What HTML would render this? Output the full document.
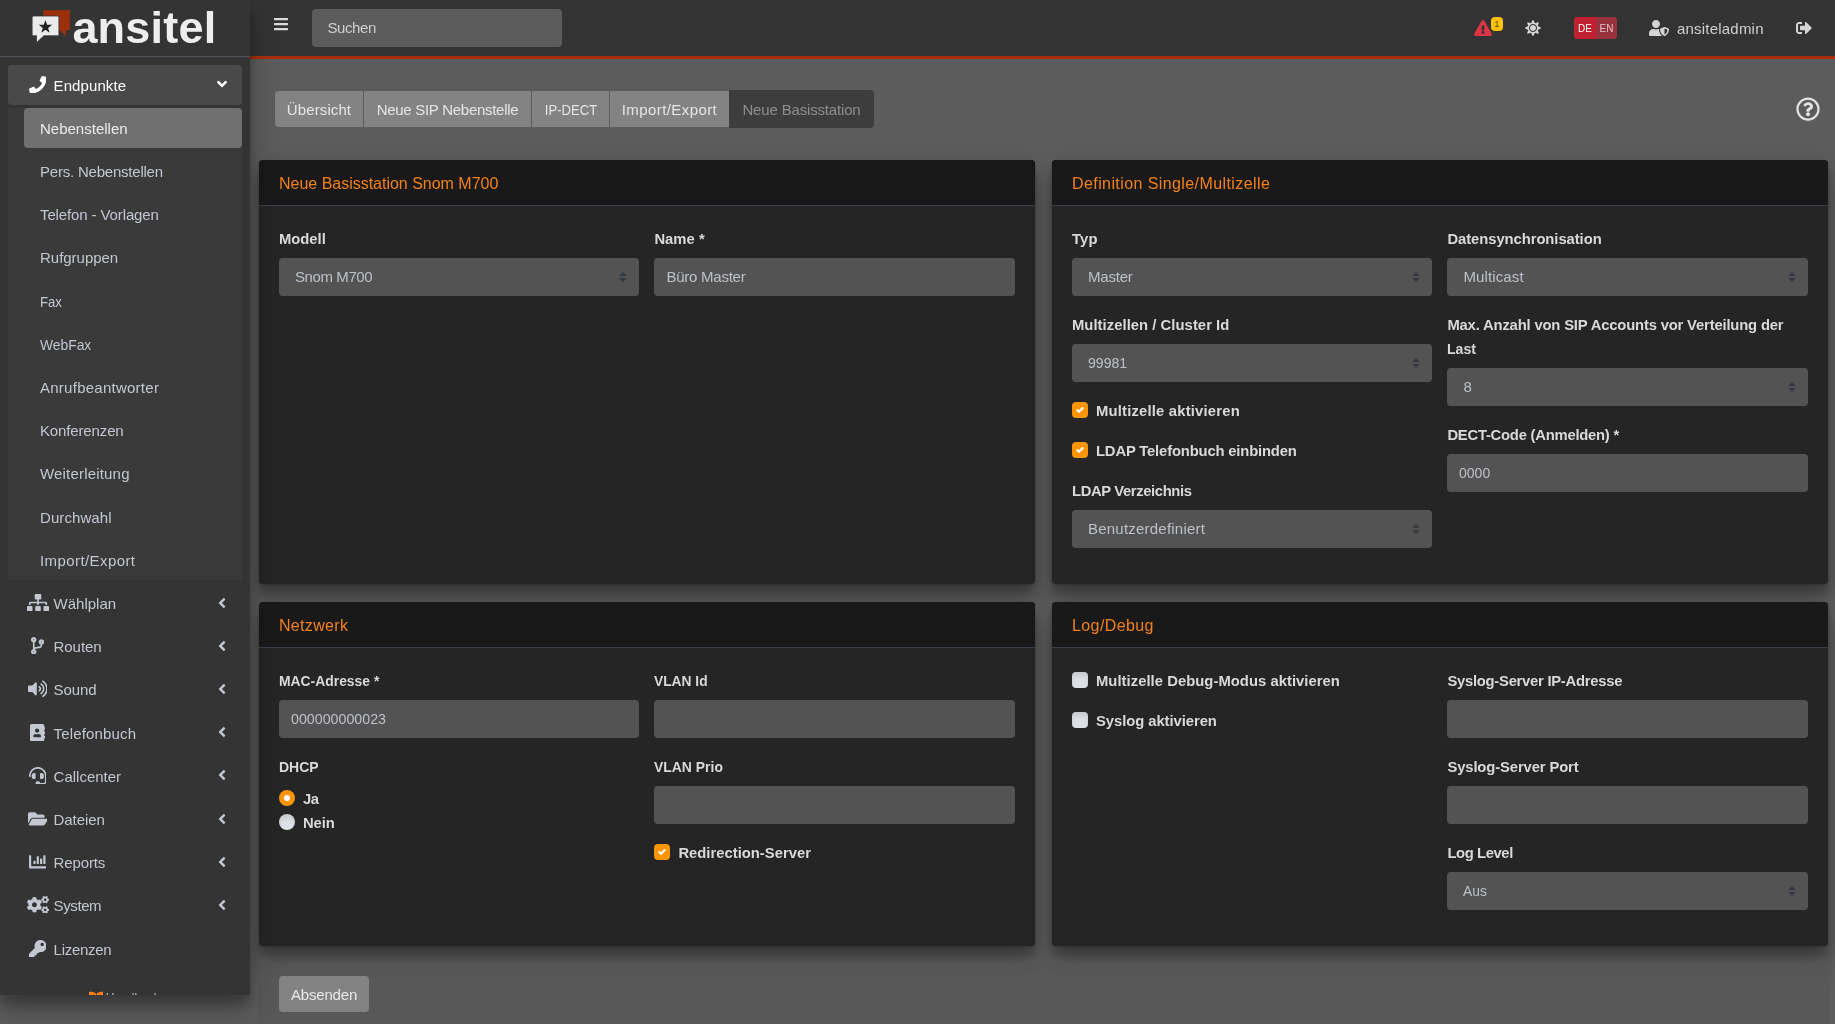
<!DOCTYPE html>
<html lang="de">
<head>
<meta charset="utf-8">
<title>ansitel - Neue Basisstation</title>
<style>
*{box-sizing:border-box}
html,body{margin:0;padding:0}
body{will-change:transform;width:1835px;height:1024px;overflow:hidden;position:relative;background:#5c5c5c;color:#dcdcdc;font-family:"Liberation Sans",sans-serif;font-size:15px;line-height:24px}
.t{position:relative;top:1px;white-space:nowrap}
.tx{display:inline-block;transform-origin:0 50%}
.btng .tx{transform-origin:50% 50%}
#sb{position:absolute;left:0;top:0;width:250px;height:995px;background:#343434;overflow:hidden;z-index:20}
#sbshadow{position:absolute;left:0;top:0;width:250px;height:995px;z-index:15;box-shadow:0 14px 28px rgba(0,0,0,.25),0 10px 10px rgba(0,0,0,.22)}
#brand{position:absolute;left:0;top:0;width:250px;height:57px;border-bottom:1px solid #4b545c}
#brand .bt{position:absolute;left:72.4px;top:2.6px;font-weight:bold;font-size:45px;line-height:50px;color:#eee;letter-spacing:.2px}
.ni{position:absolute;left:8px;width:234px;height:40px;border-radius:4px;color:#c2c7d0;white-space:nowrap}
.nt{position:absolute;left:45.6px;top:8px}
.ni.open{background:#494949;color:#fff}
#tree{position:absolute;left:8px;top:108.2px;width:234px;height:472px;background:#3a3a3a}
.si{position:absolute;left:24px;width:218px;height:40px;border-radius:4px;color:#c2c7d0;white-space:nowrap;padding:8px 16px}
.si.act{background:#707070;color:#ececec}
#hb{position:absolute;left:0;top:990px;width:250px;height:20px;color:#b8bcc4;font-size:12px;line-height:14px}
#hb span{position:absolute;left:105.8px;top:1px}
#tb{position:absolute;left:250px;top:0;width:1585px;height:59px;background:#333;border-bottom:3px solid #aa2e08;z-index:10}
#search{position:absolute;left:62px;top:9px;width:250px;height:38px;background:#5c5c5c;border-radius:4px;color:#cfcfcf;padding:7px 15.5px}
#badge{position:absolute;left:1241px;top:17px;width:12px;height:13.5px;border-radius:4px;background:#ffc107;color:#5b4a10;font-size:9.5px;line-height:13.5px;text-align:center}
#lang{position:absolute;left:1324px;top:17px;width:43px;height:22px;font-size:10px;line-height:23px;text-align:center}
#lang span{position:absolute;top:0;height:22px}
#lang .de{left:0;width:22px;background:#c0202f;color:#fff;border-radius:3px 0 0 3px}
#lang .en{left:22px;width:21px;background:#98323e;color:#e3c2c6;border-radius:0 3px 3px 0}
#user{position:absolute;left:1427px;top:16px;color:#cfcfcf;white-space:nowrap}
.btng{position:absolute;left:275px;top:91px;height:36px;display:flex}
.btng>span{display:block;height:36px;line-height:24px;padding:6px 0;text-align:center;background:#838383;color:#e6e6e6;border-right:1px solid #5c5c5c;white-space:nowrap}
.btng>span:first-child{border-radius:4px 0 0 4px}
.btng>span:last-child{border-radius:0 4px 4px 0;background:#3d3d3d;color:#8e8e8e;border-right:0;height:38px;margin-top:-1px;padding:7px 0;margin-left:-1px}
.card{position:absolute;background:#252525;border-radius:4px;box-shadow:0 0 1px rgba(0,0,0,.125),0 1px 3px rgba(0,0,0,.2),0 14px 28px rgba(0,0,0,.25),0 10px 10px rgba(0,0,0,.22)}
.card .hd{height:46px;background:#191919;border-bottom:1px solid #36404a;border-radius:4px 4px 0 0;color:#f5811a;font-size:16px;line-height:45px;padding-left:20px;white-space:nowrap}
.lb{position:absolute;font-weight:bold;color:#d9d9d9;white-space:nowrap}
.in{position:absolute;height:38px;background:#535353;border-radius:4px;color:#bcc0c8;padding:7px 12px;white-space:nowrap}
.in.sel{padding-left:16px}
.in.sel svg{position:absolute;right:11.8px;top:14px}
.ck{position:absolute;font-weight:bold;color:#d9d9d9;white-space:nowrap;padding-left:24px;height:24px}
.ck i{position:absolute;left:0;top:4px;width:16px;height:16px;border-radius:4px;display:block}
.ck i.on{background:#fc9505;box-shadow:0 0 0 .5px #1c2533}
.ck i.off{background:#dee2e6;box-shadow:inset 0 4px 4px rgba(0,0,0,.1)}
.ck i svg{position:absolute;left:4px;top:4px}
.ck i.r{border-radius:50%}
.ck i.r b{position:absolute;left:5px;top:5px;width:6px;height:6px;border-radius:50%;background:#fff}
#submit{position:absolute;left:279px;top:976px;width:90px;height:36px;border-radius:4px;background:#838383;color:#e8e8e8;text-align:center;line-height:24px;padding:6px 0}
#search .t{top:0}
#foot{position:absolute;left:258px;top:963px;width:1571px;height:61px;background:rgba(85,85,85,.44)}
.in .t{top:0}
</style>
</head>
<body>
<div id="sb">
<div id="brand"><svg style="position:absolute;left:0;top:0" width="80" height="56" viewBox="0 0 80 56"><path fill="#9e2f0c" d="M44.3 10.2h24.6a1 1 0 0 1 1 1v17.700a1 1 0 0 1-1 1h-3v6.300l-6.600-6.300h-15a1 1 0 0 1-1-1V11.200a1 1 0 0 1 1-1z"/><path fill="#ebebeb" stroke="#343434" stroke-width=".8" d="M33.600 16h23.800a1.500 1.500 0 0 1 1.500 1.500v16.800a1.500 1.500 0 0 1-1.500 1.500H43.900l-6.900 6.400-.5-.2v-6.200h-2.900a1.500 1.500 0 0 1-1.500-1.500V17.500a1.500 1.500 0 0 1 1.500-1.500z"/><path fill="#222" d="M45.45 19.95L47.10 24.78L52.20 24.86L48.11 27.92L49.62 32.79L45.45 29.85L41.28 32.79L42.79 27.92L38.70 24.86L43.80 24.78z"/></svg><span class="bt">ansitel</span></div>
<div class="ni open" style="top:65px"><svg style="position:absolute;left:20.80px;top:10.60px;" width="17.60" height="17.60" viewBox="0 0 512 512"><path fill="#fff" d="M493.400 24.600l-104-24c-11.300-2.600-22.900 3.300-27.500 13.900l-48 112c-4.200 9.800-1.400 21.300 6.900 28l60.600 49.600c-36 76.700-98.900 140.500-177.200 177.200l-49.600-60.600c-6.800-8.300-18.200-11.100-28-6.900l-112 48C3.900 366.500-2 378.100.6 389.400l24 104C27.100 504.200 36.700 512 48 512c256.100 0 464-207.500 464-464 0-11.200-7.700-20.900-18.600-23.400z"/></svg><span class="nt" style="top:8.0000px"><span class="t" style="font-size:15.0px;letter-spacing:0.083px">Endpunkte</span></span><svg style="position:absolute;left:210.00px;top:11.20px;transform:rotate(-90deg);" width="8.00" height="16.00" viewBox="0 0 256 512"><path fill="#fff" d="M31.7 239l136-136c9.400-9.400 24.600-9.400 33.900 0l22.600 22.600c9.400 9.400 9.400 24.600 0 33.900L127.900 256l96.400 96.400c9.400 9.400 9.400 24.600 0 33.900L201.700 409c-9.400 9.400-24.600 9.400-33.900 0l-136-136c-9.500-9.400-9.500-24.600-.1-34z"/></svg></div>
<div id="tree"></div>
<div class="si act" style="top:108.2000px"><span class="nt" style="left:16px;top:7.8000px"><span class="t" style="font-size:15.0px;letter-spacing:0.003px">Nebenstellen</span></span></div>
<div class="si" style="top:151.4000px"><span class="nt" style="left:16px;top:7.6000px"><span class="t" style="font-size:15.0px;letter-spacing:-0.215px">Pers. Nebenstellen</span></span></div>
<div class="si" style="top:194.6000px"><span class="nt" style="left:16px;top:7.4000px"><span class="t" style="font-size:15.0px;letter-spacing:-0.119px">Telefon - Vorlagen</span></span></div>
<div class="si" style="top:237.8000px"><span class="nt" style="left:16px;top:7.2000px"><span class="t" style="font-size:15.0px;letter-spacing:-0.023px">Rufgruppen</span></span></div>
<div class="si" style="top:281.0000px"><span class="nt" style="left:16px;top:8.0000px"><span class="t tx" style="font-size:15.0px;transform:scaleX(0.8755)">Fax</span></span></div>
<div class="si" style="top:324.2000px"><span class="nt" style="left:16px;top:7.8000px"><span class="t tx" style="font-size:15.0px;transform:scaleX(0.9230)">WebFax</span></span></div>
<div class="si" style="top:367.4000px"><span class="nt" style="left:16px;top:7.6000px"><span class="t" style="font-size:15.0px;letter-spacing:0.255px">Anrufbeantworter</span></span></div>
<div class="si" style="top:410.6000px"><span class="nt" style="left:16px;top:7.4000px"><span class="t" style="font-size:15.0px;letter-spacing:-0.138px">Konferenzen</span></span></div>
<div class="si" style="top:453.8000px"><span class="nt" style="left:16px;top:7.2000px"><span class="t" style="font-size:15.0px;letter-spacing:0.185px">Weiterleitung</span></span></div>
<div class="si" style="top:497.0000px"><span class="nt" style="left:16px;top:8.0000px"><span class="t" style="font-size:15.0px;letter-spacing:0.078px">Durchwahl</span></span></div>
<div class="si" style="top:540.2000px"><span class="nt" style="left:16px;top:7.8000px"><span class="t" style="font-size:15.0px;letter-spacing:0.414px">Import/Export</span></span></div>
<div class="ni" style="top:583.4000px"><svg style="position:absolute;left:18.60px;top:10.20px;" width="22.00" height="17.60" viewBox="0 0 640 512"><path fill="#c2c7d0" d="M128 352H32c-17.670 0-32 14.330-32 32v96c0 17.670 14.330 32 32 32h96c17.670 0 32-14.330 32-32v-96c0-17.670-14.330-32-32-32zm-24-80h192v48h48v-48h192v48h48v-57.590c0-21.170-17.230-38.410-38.410-38.410H344v-64h40c17.670 0 32-14.330 32-32V32c0-17.670-14.330-32-32-32H256c-17.670 0-32 14.330-32 32v96c0 17.670 14.330 32 32 32h40v64H94.410C73.230 224 56 241.230 56 262.410V320h48v-48zm264 80h-96c-17.670 0-32 14.330-32 32v96c0 17.670 14.330 32 32 32h96c17.670 0 32-14.330 32-32v-96c0-17.670-14.330-32-32-32zm240 0h-96c-17.670 0-32 14.330-32 32v96c0 17.670 14.330 32 32 32h96c17.670 0 32-14.330 32-32v-96c0-17.670-14.330-32-32-32z"/></svg><span class="nt" style="top:7.6000px"><span class="t" style="font-size:15.0px;letter-spacing:-0.007px">Wählplan</span></span><svg style="position:absolute;left:210.00px;top:11.20px;" width="8.00" height="16.00" viewBox="0 0 256 512"><path fill="#c2c7d0" d="M31.7 239l136-136c9.400-9.400 24.600-9.400 33.900 0l22.600 22.600c9.400 9.400 9.400 24.600 0 33.900L127.900 256l96.400 96.400c9.400 9.400 9.400 24.600 0 33.900L201.700 409c-9.400 9.400-24.600 9.400-33.900 0l-136-136c-9.500-9.400-9.500-24.600-.1-34z"/></svg></div>
<div class="ni" style="top:626.6000px"><svg style="position:absolute;left:23.00px;top:10.00px;" width="13.20" height="17.60" viewBox="0 0 384 512"><path fill="#c2c7d0" d="M384 144c0-44.200-35.800-80-80-80s-80 35.800-80 80c0 36.400 24.300 67.100 57.500 76.800-.6 16.100-4.200 28.500-11 36.900-15.400 19.200-49.300 22.400-85.200 25.700-28.200 2.600-57.400 5.400-81.300 16.900v-144c32.500-10.200 56-40.500 56-76.300 0-44.200-35.800-80-80-80S0 35.800 0 80c0 35.800 23.500 66.100 56 76.300v199.300C23.500 365.900 0 396.200 0 432c0 44.200 35.800 80 80 80s80-35.800 80-80c0-34-21.200-63.100-51.200-74.600 3.100-5.200 7.800-9.800 14.900-13.400 16.200-8.200 40.400-10.400 66.100-12.800 42.200-3.900 90-8.400 118.200-43.400 14-17.400 21.100-39.800 21.600-67.900 31.600-10.800 54.400-40.700 54.400-75.900zM80 64c8.800 0 16 7.200 16 16s-7.200 16-16 16-16-7.200-16-16 7.200-16 16-16zm0 384c-8.800 0-16-7.200-16-16s7.200-16 16-16 16 7.200 16 16-7.200 16-16 16zm224-320c8.800 0 16 7.200 16 16s-7.200 16-16 16-16-7.200-16-16 7.200-16 16-16z"/></svg><span class="nt" style="top:7.4000px"><span class="t" style="font-size:15.0px;letter-spacing:-0.075px">Routen</span></span><svg style="position:absolute;left:210.00px;top:11.20px;" width="8.00" height="16.00" viewBox="0 0 256 512"><path fill="#c2c7d0" d="M31.7 239l136-136c9.400-9.400 24.600-9.400 33.900 0l22.600 22.600c9.400 9.400 9.400 24.600 0 33.900L127.900 256l96.400 96.400c9.400 9.400 9.400 24.600 0 33.900L201.700 409c-9.400 9.400-24.600 9.400-33.900 0l-136-136c-9.500-9.400-9.500-24.600-.1-34z"/></svg></div>
<div class="ni" style="top:669.8000px"><svg style="position:absolute;left:19.70px;top:9.80px;" width="19.80" height="17.60" viewBox="0 0 576 512"><path fill="#c2c7d0" d="M215.030 71.050L126.060 160H24c-13.260 0-24 10.740-24 24v144c0 13.250 10.740 24 24 24h102.060l88.970 88.950c15.030 15.030 40.970 4.470 40.970-16.970V88.020c0-21.460-25.960-31.980-40.970-16.970zm233.320-51.080c-11.170-7.330-26.180-4.240-33.510 6.950-7.340 11.170-4.220 26.180 6.950 33.510 66.270 43.490 105.820 116.600 105.820 195.580 0 78.980-39.550 152.090-105.820 195.580-11.170 7.320-14.290 22.340-6.950 33.500 7.040 10.710 21.930 14.560 33.510 6.950C528.270 439.580 576 351.330 576 256S528.270 72.430 448.350 19.970zM480 256c0-63.530-32.060-121.940-85.770-156.240-11.190-7.140-26.030-3.820-33.120 7.460s-3.780 26.210 7.410 33.360C408.270 165.970 432 209.110 432 256s-23.730 90.030-63.480 115.420c-11.190 7.140-14.500 22.070-7.410 33.360 6.510 10.360 21.120 15.140 33.120 7.460C447.940 377.940 480 319.540 480 256zm-141.770-76.870c-11.580-6.330-26.190-2.160-32.610 9.450-6.390 11.610-2.160 26.200 9.450 32.610C327.980 228.280 336 241.630 336 256c0 14.380-8.020 27.720-20.920 34.810-11.610 6.410-15.840 21-9.450 32.610 6.430 11.660 21.050 15.800 32.610 9.450 28.230-15.550 45.770-45 45.770-76.880s-17.540-61.320-45.780-76.860z"/></svg><span class="nt" style="top:7.2000px"><span class="t" style="font-size:15.0px;letter-spacing:-0.094px">Sound</span></span><svg style="position:absolute;left:210.00px;top:11.20px;" width="8.00" height="16.00" viewBox="0 0 256 512"><path fill="#c2c7d0" d="M31.7 239l136-136c9.400-9.400 24.600-9.400 33.900 0l22.600 22.600c9.400 9.400 9.400 24.600 0 33.900L127.900 256l96.400 96.400c9.400 9.400 9.400 24.600 0 33.900L201.700 409c-9.400 9.400-24.600 9.400-33.900 0l-136-136c-9.500-9.400-9.500-24.600-.1-34z"/></svg></div>
<div class="ni" style="top:713.0000px"><svg style="position:absolute;left:21.90px;top:10.60px;" width="15.40" height="17.60" viewBox="0 0 448 512"><path fill="#c2c7d0" d="M436 160c6.600 0 12-5.400 12-12v-40c0-6.600-5.400-12-12-12h-20V48c0-26.500-21.500-48-48-48H48C21.500 0 0 21.500 0 48v416c0 26.500 21.500 48 48 48h320c26.500 0 48-21.500 48-48v-48h20c6.600 0 12-5.400 12-12v-40c0-6.600-5.400-12-12-12h-20v-64h20c6.600 0 12-5.400 12-12v-40c0-6.600-5.400-12-12-12h-20v-64h20zm-228-32c35.300 0 64 28.700 64 64s-28.700 64-64 64-64-28.700-64-64 28.700-64 64-64zm112 236.800c0 10.600-10 19.200-22.400 19.200H118.400C106 384 96 375.400 96 364.800v-19.200c0-31.800 30.100-57.600 67.200-57.600h5c12.300 5.100 25.700 8 39.800 8s27.600-2.900 39.800-8h5c37.100 0 67.200 25.800 67.200 57.600v19.200z"/></svg><span class="nt" style="top:8.0000px"><span class="t" style="font-size:15.0px;letter-spacing:0.159px">Telefonbuch</span></span><svg style="position:absolute;left:210.00px;top:11.20px;" width="8.00" height="16.00" viewBox="0 0 256 512"><path fill="#c2c7d0" d="M31.7 239l136-136c9.400-9.400 24.600-9.400 33.900 0l22.600 22.600c9.400 9.400 9.400 24.600 0 33.900L127.900 256l96.400 96.400c9.400 9.400 9.400 24.600 0 33.900L201.700 409c-9.400 9.400-24.600 9.400-33.900 0l-136-136c-9.500-9.400-9.500-24.600-.1-34z"/></svg></div>
<div class="ni" style="top:756.2000px"><svg style="position:absolute;left:20.80px;top:10.40px;" width="17.60" height="17.60" viewBox="0 0 512 512"><path fill="#c2c7d0" d="M192 208c0-17.670-14.330-32-32-32h-16c-35.350 0-64 28.650-64 64v48c0 35.350 28.650 64 64 64h16c17.670 0 32-14.330 32-32V208zm176 144c35.350 0 64-28.650 64-64v-48c0-35.350-28.650-64-64-64h-16c-17.670 0-32 14.330-32 32v112c0 17.670 14.330 32 32 32h16zM256 0C113.180 0 4.580 118.830 0 256v16c0 8.840 7.160 16 16 16h16c8.840 0 16-7.160 16-16v-16c0-114.690 93.310-208 208-208s208 93.310 208 208h-.12c.08 2.430.12 165.720.12 165.720 0 23.350-18.930 42.280-42.280 42.280H320c0-26.510-21.490-48-48-48h-32c-26.510 0-48 21.490-48 48s21.490 48 48 48h181.720c49.860 0 90.280-40.420 90.280-90.280V256C507.420 118.830 398.820 0 256 0z"/></svg><span class="nt" style="top:7.8000px"><span class="t" style="font-size:15.0px;letter-spacing:-0.003px">Callcenter</span></span><svg style="position:absolute;left:210.00px;top:11.20px;" width="8.00" height="16.00" viewBox="0 0 256 512"><path fill="#c2c7d0" d="M31.7 239l136-136c9.400-9.400 24.600-9.400 33.900 0l22.600 22.600c9.400 9.400 9.400 24.600 0 33.900L127.900 256l96.400 96.400c9.400 9.400 9.400 24.600 0 33.900L201.700 409c-9.400 9.400-24.600 9.400-33.900 0l-136-136c-9.500-9.400-9.500-24.600-.1-34z"/></svg></div>
<div class="ni" style="top:799.4000px"><svg style="position:absolute;left:19.70px;top:10.20px;" width="19.80" height="17.60" viewBox="0 0 576 512"><path fill="#c2c7d0" d="M572.694 292.093L500.270 416.248A63.997 63.997 0 0 1 444.989 448H45.025c-18.523 0-30.064-20.093-20.731-36.093l72.424-124.155A64 64 0 0 1 152 256h399.964c18.523 0 30.064 20.093 20.730 36.093zM152 224h328v-48c0-26.510-21.490-48-48-48H272l-64-64H48C21.490 64 0 85.490 0 112v278.046l69.077-118.418C86.214 242.250 117.989 224 152 224z"/></svg><span class="nt" style="top:7.6000px"><span class="t" style="font-size:15.0px;letter-spacing:-0.084px">Dateien</span></span><svg style="position:absolute;left:210.00px;top:11.20px;" width="8.00" height="16.00" viewBox="0 0 256 512"><path fill="#c2c7d0" d="M31.7 239l136-136c9.400-9.400 24.600-9.400 33.900 0l22.600 22.600c9.400 9.400 9.400 24.600 0 33.900L127.900 256l96.400 96.400c9.400 9.400 9.400 24.600 0 33.900L201.700 409c-9.400 9.400-24.600 9.400-33.900 0l-136-136c-9.500-9.400-9.500-24.600-.1-34z"/></svg></div>
<div class="ni" style="top:842.6000px"><svg style="position:absolute;left:20.80px;top:10.00px;" width="17.60" height="17.60" viewBox="0 0 512 512"><path fill="#c2c7d0" d="M332.800 320h38.400c6.400 0 12.800-6.400 12.800-12.800V172.800c0-6.400-6.400-12.800-12.800-12.800h-38.400c-6.400 0-12.800 6.400-12.800 12.800v134.400c0 6.400 6.400 12.800 12.800 12.800zm96 0h38.400c6.400 0 12.800-6.400 12.800-12.800V76.800c0-6.400-6.400-12.800-12.800-12.800h-38.400c-6.400 0-12.800 6.400-12.800 12.800v230.400c0 6.400 6.400 12.800 12.800 12.800zm-288 0h38.400c6.400 0 12.800-6.400 12.800-12.800v-70.400c0-6.400-6.400-12.800-12.800-12.800h-38.400c-6.400 0-12.800 6.400-12.800 12.800v70.400c0 6.400 6.400 12.800 12.800 12.800zm96 0h38.400c6.400 0 12.800-6.400 12.800-12.800V108.800c0-6.400-6.400-12.800-12.800-12.800h-38.400c-6.400 0-12.800 6.400-12.800 12.800v198.400c0 6.400 6.400 12.800 12.800 12.800zM496 384H64V80c0-8.840-7.160-16-16-16H16C7.160 64 0 71.160 0 80v336c0 17.670 14.330 32 32 32h464c8.840 0 16-7.160 16-16v-32c0-8.840-7.160-16-16-16z"/></svg><span class="nt" style="top:7.4000px"><span class="t" style="font-size:15.0px;letter-spacing:-0.139px">Reports</span></span><svg style="position:absolute;left:210.00px;top:11.20px;" width="8.00" height="16.00" viewBox="0 0 256 512"><path fill="#c2c7d0" d="M31.7 239l136-136c9.400-9.400 24.600-9.400 33.900 0l22.600 22.600c9.400 9.400 9.400 24.600 0 33.900L127.900 256l96.400 96.400c9.400 9.400 9.400 24.600 0 33.900L201.700 409c-9.400 9.400-24.600 9.400-33.900 0l-136-136c-9.500-9.400-9.500-24.600-.1-34z"/></svg></div>
<div class="ni" style="top:885.8000px"><svg style="position:absolute;left:18.60px;top:9.80px;" width="22.00" height="17.60" viewBox="0 0 640 512"><path fill="#c2c7d0" d="M512.100 191l-8.200 14.300c-3 5.300-9.400 7.500-15.100 5.400-11.800-4.400-22.600-10.700-32.100-18.600-4.600-3.800-5.800-10.500-2.800-15.700l8.200-14.300c-6.900-8-12.300-17.300-15.900-27.400h-16.500c-6 0-11.200-4.300-12.200-10.300-2-12-2.100-24.600 0-37.100 1-6 6.200-10.400 12.200-10.400h16.500c3.600-10.100 9-19.400 15.900-27.400l-8.200-14.300c-3-5.200-1.900-11.900 2.800-15.700 9.500-7.900 20.400-14.200 32.100-18.600 5.700-2.100 12.100.1 15.100 5.400l8.200 14.300c10.500-1.900 21.200-1.900 31.700 0L552 6.300c3-5.300 9.400-7.500 15.100-5.400 11.800 4.400 22.600 10.700 32.100 18.600 4.600 3.800 5.800 10.500 2.800 15.700l-8.200 14.300c6.900 8 12.300 17.300 15.900 27.400h16.500c6 0 11.200 4.300 12.200 10.300 2 12 2.100 24.600 0 37.100-1 6-6.200 10.400-12.200 10.400h-16.500c-3.600 10.100-9 19.400-15.900 27.400l8.200 14.300c3 5.200 1.900 11.900-2.800 15.700-9.500 7.900-20.400 14.200-32.100 18.600-5.700 2.100-12.100-.1-15.100-5.400l-8.200-14.300c-10.400 1.900-21.200 1.900-31.700 0zm-10.500-58.800c38.500 29.600 82.400-14.300 52.800-52.800-38.500-29.700-82.400 14.300-52.800 52.800zM386.300 286.100l33.700 16.800c10.100 5.800 14.500 18.100 10.500 29.100-8.900 24.200-26.400 46.400-42.600 65.800-7.400 8.900-20.200 11.100-30.300 5.300l-29.100-16.800c-16 13.700-34.600 24.600-54.900 31.700v33.600c0 11.600-8.300 21.600-19.700 23.600-24.600 4.200-50.400 4.400-75.900 0-11.500-2-20-11.900-20-23.600V418c-20.300-7.200-38.900-18-54.900-31.700L74 403c-10 5.800-22.900 3.600-30.300-5.300-16.200-19.400-33.300-41.600-42.200-65.700-4-10.900.4-23.200 10.500-29.100l33.300-16.800c-3.900-20.900-3.900-42.400 0-63.400L12 205.800c-10.100-5.800-14.600-18.100-10.500-29 8.900-24.200 26-46.400 42.200-65.800 7.400-8.900 20.200-11.100 30.300-5.300l29.100 16.800c16-13.700 34.600-24.600 54.900-31.700V57.100c0-11.500 8.200-21.500 19.600-23.500 24.600-4.200 50.500-4.400 76-.1 11.500 2 20 11.900 20 23.600v33.600c20.300 7.200 38.900 18 54.900 31.700l29.100-16.800c10-5.800 22.900-3.600 30.300 5.300 16.200 19.400 33.200 41.600 42.100 65.800 4 10.900.1 23.200-10 29.100l-33.700 16.800c3.900 21 3.900 42.500 0 63.500zm-117.600 21.100c59.200-77-28.700-164.900-105.700-105.700-59.200 77 28.700 164.900 105.700 105.700zm243.400 182.700l-8.200 14.300c-3 5.300-9.400 7.500-15.100 5.400-11.800-4.400-22.600-10.700-32.100-18.600-4.600-3.800-5.800-10.500-2.800-15.700l8.200-14.300c-6.900-8-12.300-17.300-15.900-27.400h-16.500c-6 0-11.200-4.300-12.200-10.300-2-12-2.100-24.600 0-37.100 1-6 6.200-10.400 12.200-10.400h16.500c3.600-10.100 9-19.400 15.900-27.400l-8.200-14.300c-3-5.200-1.900-11.900 2.800-15.700 9.500-7.900 20.400-14.200 32.100-18.600 5.700-2.100 12.100.1 15.100 5.400l8.200 14.300c10.500-1.900 21.200-1.900 31.700 0l8.200-14.300c3-5.300 9.400-7.500 15.100-5.400 11.800 4.400 22.600 10.700 32.100 18.600 4.600 3.800 5.800 10.500 2.800 15.700l-8.200 14.300c6.900 8 12.300 17.300 15.900 27.400h16.500c6 0 11.200 4.300 12.200 10.300 2 12 2.100 24.600 0 37.100-1 6-6.200 10.400-12.200 10.400h-16.500c-3.600 10.100-9 19.400-15.900 27.400l8.200 14.300c3 5.200 1.900 11.900-2.800 15.700-9.500 7.900-20.400 14.200-32.100 18.600-5.700 2.100-12.100-.1-15.100-5.400l-8.200-14.300c-10.400 1.900-21.200 1.900-31.700 0zM501.600 431c38.500 29.600 82.400-14.300 52.800-52.800-38.500-29.600-82.400 14.300-52.800 52.800z"/></svg><span class="nt" style="top:7.2000px"><span class="t" style="font-size:15.0px;letter-spacing:-0.403px">System</span></span><svg style="position:absolute;left:210.00px;top:11.20px;" width="8.00" height="16.00" viewBox="0 0 256 512"><path fill="#c2c7d0" d="M31.7 239l136-136c9.400-9.400 24.600-9.400 33.900 0l22.600 22.600c9.400 9.400 9.400 24.600 0 33.900L127.900 256l96.400 96.400c9.400 9.400 9.400 24.600 0 33.900L201.700 409c-9.400 9.400-24.600 9.400-33.900 0l-136-136c-9.500-9.400-9.500-24.600-.1-34z"/></svg></div>
<div class="ni" style="top:929.0000px"><svg style="position:absolute;left:20.80px;top:10.60px;" width="17.60" height="17.60" viewBox="0 0 512 512"><path fill="#c2c7d0" d="M512 176.001C512 273.203 433.202 352 336 352c-11.220 0-22.190-1.062-32.827-3.069l-24.012 27.014A23.999 23.999 0 0 1 261.223 384H224v40c0 13.255-10.745 24-24 24h-40v40c0 13.255-10.745 24-24 24H24c-13.255 0-24-10.745-24-24v-78.059c0-6.365 2.529-12.470 7.029-16.971l161.802-161.802C163.108 213.814 160 195.271 160 176 160 78.798 238.797.001 335.999 0 433.488-.001 512 78.511 512 176.001zM336 128c0 26.510 21.490 48 48 48s48-21.490 48-48-21.490-48-48-48-48 21.490-48 48z"/></svg><span class="nt" style="top:8.0000px"><span class="t" style="font-size:15.0px;letter-spacing:-0.292px">Lizenzen</span></span></div>
<div id="hb"><svg style="position:absolute;left:88.60px;top:0.80px;" width="14.62" height="13.00" viewBox="0 0 576 512"><path fill="#fd7e14" d="M542.220 32.050c-54.800 3.110-163.720 14.430-230.960 55.590-4.640 2.840-7.270 7.890-7.270 13.170v363.870c0 11.550 12.630 18.850 23.280 13.490 69.180-34.820 169.230-44.320 218.700-46.920 16.890-.89 30.020-14.430 30.020-30.660V62.750c.01-17.710-15.350-31.740-33.770-30.700zM264.730 87.640C197.500 46.480 88.580 35.170 33.780 32.050 15.360 31.010 0 45.040 0 62.750V400.600c0 16.240 13.130 29.780 30.020 30.660 49.490 2.600 149.590 12.110 218.770 46.950 10.620 5.350 23.210-1.940 23.210-13.460V100.630c0-5.290-2.620-10.140-7.270-12.990z"/></svg><span>Handbuch</span></div>
</div>
<div id="tb">
<svg style="position:absolute;left:24.00px;top:15.50px;" width="14.00" height="16.00" viewBox="0 0 448 512"><path fill="#dcdcdc" d="M16 132h416c8.837 0 16-7.163 16-16V76c0-8.837-7.163-16-16-16H16C7.163 60 0 67.163 0 76v40c0 8.837 7.163 16 16 16zm0 160h416c8.837 0 16-7.163 16-16v-40c0-8.837-7.163-16-16-16H16c-8.837 0-16 7.163-16 16v40c0 8.837 7.163 16 16 16zm0 160h416c8.837 0 16-7.163 16-16v-40c0-8.837-7.163-16-16-16H16c-8.837 0-16 7.163-16 16v40c0 8.837 7.163 16 16 16z"/></svg><div id="search"><span class="t" style="font-size:15.0px;letter-spacing:-0.415px">Suchen</span></div>
<svg style="position:absolute;left:1224.00px;top:20.00px;" width="18.00" height="16.00" viewBox="0 0 576 512"><path fill="#dc3545" d="M569.517 440.013C587.975 472.007 564.806 512 527.940 512H48.054c-36.937 0-59.999-40.055-41.577-71.987L246.423 23.985c18.467-32.009 64.720-31.951 83.154 0l239.940 416.028zM288 354c-25.405 0-46 20.595-46 46s20.595 46 46 46 46-20.595 46-46-20.595-46-46-46zm-43.673-165.346l7.418 136c.347 6.364 5.609 11.346 11.982 11.346h48.546c6.373 0 11.635-4.982 11.982-11.346l7.418-136c.375-6.874-5.098-12.654-11.982-12.654h-63.383c-6.884 0-12.356 5.780-11.981 12.654z"/></svg><span id="badge">1</span><svg style="position:absolute;left:1275.10px;top:20.00px;" width="16.00" height="16.00" viewBox="0 0 512 512"><path fill="#d4d4d4" d="M256 160c-52.900 0-96 43.100-96 96s43.100 96 96 96 96-43.100 96-96-43.100-96-96-96zm246.400 80.500l-94.700-47.300 33.500-100.400c4.500-13.600-8.400-26.500-21.900-21.900l-100.400 33.500-47.400-94.800c-6.400-12.800-24.600-12.800-31 0l-47.300 94.700L92.700 70.800c-13.600-4.500-26.500 8.400-21.900 21.900l33.500 100.400-94.700 47.400c-12.800 6.400-12.800 24.600 0 31l94.700 47.300-33.500 100.500c-4.500 13.600 8.400 26.500 21.900 21.900l100.400-33.500 47.300 94.700c6.400 12.800 24.600 12.800 31 0l47.300-94.700 100.400 33.500c13.600 4.500 26.500-8.400 21.900-21.900l-33.500-100.400 94.700-47.300c13-6.500 13-24.700.2-31.100zm-155.900 106c-49.900 49.900-131.100 49.900-181 0-49.900-49.900-49.900-131.100 0-181 49.900-49.900 131.100-49.900 181 0 49.900 49.900 49.900 131.100 0 181z"/></svg><div id="lang"><span class="de">DE</span><span class="en">EN</span></div><svg style="position:absolute;left:1398.80px;top:20.00px;" width="20.00" height="16.00" viewBox="0 0 640 512"><path fill="#d4d4d4" d="M622.300 271.100l-115.200-45c-4.100-1.600-12.600-3.700-22.200 0l-115.200 45c-10.700 4.200-17.700 14-17.700 24.900 0 111.600 68.700 188.800 132.900 213.900 9.600 3.700 18 1.600 22.200 0C558.400 489.900 640 420.500 640 296c0-10.900-7-20.700-17.700-24.900zM496 462.400V273.300l95.500 37.300c-5.600 87.100-60.900 135.400-95.500 151.800zM224 256c70.700 0 128-57.300 128-128S294.700 0 224 0 96 57.300 96 128s57.300 128 128 128zm96 40c0-2.500.8-4.800 1.100-7.200-2.500-.1-4.900-.8-7.500-.8h-16.700c-22.200 10.200-46.900 16-72.900 16s-50.600-5.800-72.900-16h-16.700C60.200 288 0 348.200 0 422.400V464c0 26.500 21.500 48 48 48h352c6.800 0 13.300-1.500 19.200-4-54-42.900-99.200-116.700-99.200-212z"/></svg><span id="user"><span class="t" style="font-size:15.0px;letter-spacing:0.207px">ansiteladmin</span></span><svg style="position:absolute;left:1546.00px;top:20.00px;" width="16.00" height="16.00" viewBox="0 0 512 512"><path fill="#d4d4d4" d="M497 273L329 441c-15 15-41 4.500-41-17v-96H152c-13.300 0-24-10.700-24-24v-96c0-13.300 10.700-24 24-24h136V88c0-21.400 25.900-32 41-17l168 168c9.300 9.400 9.300 24.600 0 34zM192 436v-40c0-6.600-5.400-12-12-12H96c-17.700 0-32-14.300-32-32V160c0-17.700 14.300-32 32-32h84c6.600 0 12-5.400 12-12V76c0-6.600-5.400-12-12-12H96c-53 0-96 43-96 96v192c0 53 43 96 96 96h84c6.600 0 12-5.400 12-12z"/></svg></div>
<div id="sbshadow"></div>
<div class="btng"><span style="width:89px"><span class="t" style="font-size:15.0px;letter-spacing:0.105px">Übersicht</span></span><span style="width:168px"><span class="t" style="font-size:15.0px;letter-spacing:-0.280px">Neue SIP Nebenstelle</span></span><span style="width:78px"><span class="t tx" style="font-size:15.0px;transform:scaleX(0.8733)">IP-DECT</span></span><span style="width:120px"><span class="t" style="font-size:15.0px;letter-spacing:0.414px">Import/Export</span></span><span style="width:145px"><span class="t" style="font-size:15.0px;letter-spacing:-0.163px">Neue Basisstation</span></span></div>
<svg style="position:absolute;left:1796.20px;top:96.80px;" width="24.00" height="24.00" viewBox="0 0 512 512"><path fill="#e4e4e4" d="M256 8C119.043 8 8 119.083 8 256c0 136.997 111.043 248 248 248s248-111.003 248-248C504 119.083 392.957 8 256 8zm0 448c-110.532 0-200-89.431-200-200 0-110.495 89.472-200 200-200 110.491 0 200 89.471 200 200 0 110.530-89.431 200-200 200zm107.244-255.200c0 67.052-72.421 68.084-72.421 92.863V300c0 6.627-5.373 12-12 12h-45.647c-6.627 0-12-5.373-12-12v-8.659c0-35.745 27.100-50.034 47.579-61.516 17.561-9.845 28.324-16.541 28.324-29.579 0-17.246-21.999-28.693-39.784-28.693-23.189 0-33.894 10.977-48.942 29.969-4.057 5.120-11.460 6.071-16.666 2.124l-27.824-21.098c-5.107-3.872-6.251-11.066-2.644-16.363C184.846 131.491 214.940 112 261.794 112c49.071 0 101.450 38.304 101.450 88.800zM298 368c0 23.159-18.841 42-42 42s-42-18.841-42-42 18.841-42 42-42 42 18.841 42 42z"/></svg><div class="card" style="left:259px;top:160px;width:776px;height:424px"><div class="hd"><span class="t" style="font-size:16px;letter-spacing:-0.014px">Neue Basisstation Snom M700</span></div>
<div class="lb" style="left:20px;top:66px"><span class="t" style="font-size:14.8px;letter-spacing:-0.012px">Modell</span></div>
<div class="in sel" style="left:20px;top:98px;width:360.2px"><span class="t" style="font-size:15.0px;letter-spacing:-0.409px">Snom M700</span><svg width="8" height="10" viewBox="0 0 4 5"><path fill="#343a40" d="M2 0L0 2h4zm0 5L0 3h4z"/></svg></div>
<div class="lb" style="left:395.4px;top:66px"><span class="t" style="font-size:14.8px;letter-spacing:0.026px">Name *</span></div>
<div class="in" style="left:395.4px;top:98px;width:360.2px"><span class="t" style="font-size:15.0px;letter-spacing:-0.240px">Büro Master</span></div>
</div>
<div class="card" style="left:1052px;top:160px;width:776px;height:424px"><div class="hd"><span class="t" style="font-size:16px;letter-spacing:0.409px">Definition Single/Multizelle</span></div>
<div class="lb" style="left:20px;top:66px"><span class="t" style="font-size:14.8px;letter-spacing:0.141px">Typ</span></div>
<div class="in sel" style="left:20px;top:98px;width:360.2px"><span class="t" style="font-size:15.0px;letter-spacing:-0.209px">Master</span><svg width="8" height="10" viewBox="0 0 4 5"><path fill="#343a40" d="M2 0L0 2h4zm0 5L0 3h4z"/></svg></div>
<div class="lb" style="left:20px;top:152px"><span class="t" style="font-size:14.8px;letter-spacing:0.047px">Multizellen / Cluster Id</span></div>
<div class="in sel" style="left:20px;top:184px;width:360.2px"><span class="t tx" style="font-size:15.0px;transform:scaleX(0.9372)">99981</span><svg width="8" height="10" viewBox="0 0 4 5"><path fill="#343a40" d="M2 0L0 2h4zm0 5L0 3h4z"/></svg></div>
<div class="ck" style="left:20px;top:238px"><i class="on"><svg width="8" height="8" viewBox="0 0 8 8"><path fill="#fff" d="M6.564.75l-3.590 3.612-1.538-1.550L0 4.260l2.974 2.990L8 2.193z"/></svg></i><span class="t" style="font-size:14.8px;letter-spacing:0.194px">Multizelle aktivieren</span></div>
<div class="ck" style="left:20px;top:278px"><i class="on"><svg width="8" height="8" viewBox="0 0 8 8"><path fill="#fff" d="M6.564.75l-3.590 3.612-1.538-1.550L0 4.260l2.974 2.990L8 2.193z"/></svg></i><span class="t" style="font-size:14.8px;letter-spacing:-0.167px">LDAP Telefonbuch einbinden</span></div>
<div class="lb" style="left:20px;top:318px"><span class="t" style="font-size:14.8px;letter-spacing:-0.371px">LDAP Verzeichnis</span></div>
<div class="in sel" style="left:20px;top:350px;width:360.2px"><span class="t" style="font-size:15.0px;letter-spacing:0.218px">Benutzerdefiniert</span><svg width="8" height="10" viewBox="0 0 4 5"><path fill="#343a40" d="M2 0L0 2h4zm0 5L0 3h4z"/></svg></div>
<div class="lb" style="left:395.4px;top:66px"><span class="t" style="font-size:14.8px;letter-spacing:-0.058px">Datensynchronisation</span></div>
<div class="in sel" style="left:395.4px;top:98px;width:360.2px"><span class="t" style="font-size:15.0px;letter-spacing:0.127px">Multicast</span><svg width="8" height="10" viewBox="0 0 4 5"><path fill="#343a40" d="M2 0L0 2h4zm0 5L0 3h4z"/></svg></div>
<div class="lb" style="left:395.4px;top:152px"><span class="t" style="font-size:14.8px;letter-spacing:-0.169px">Max. Anzahl von SIP Accounts vor Verteilung der</span><br><span class="t tx" style="font-size:14.8px;transform:scaleX(0.9528)">Last</span></div>
<div class="in sel" style="left:395.4px;top:208px;width:360.2px"><span class="t" style="font-size:15.0px">8</span><svg width="8" height="10" viewBox="0 0 4 5"><path fill="#343a40" d="M2 0L0 2h4zm0 5L0 3h4z"/></svg></div>
<div class="lb" style="left:395.4px;top:262px"><span class="t" style="font-size:14.8px;letter-spacing:-0.236px">DECT-Code (Anmelden) *</span></div>
<div class="in" style="left:395.4px;top:294px;width:360.2px"><span class="t tx" style="font-size:15.0px;transform:scaleX(0.9348)">0000</span></div>
</div>
<div class="card" style="left:259px;top:602px;width:776px;height:344px"><div class="hd"><span class="t" style="font-size:16px;letter-spacing:0.316px">Netzwerk</span></div>
<div class="lb" style="left:20px;top:66px"><span class="t tx" style="font-size:14.8px;transform:scaleX(0.9382)">MAC-Adresse *</span></div>
<div class="in" style="left:20px;top:98px;width:360.2px"><span class="t tx" style="font-size:15.0px;transform:scaleX(0.9490)">000000000023</span></div>
<div class="lb" style="left:20px;top:152px"><span class="t tx" style="font-size:14.8px;transform:scaleX(0.9466)">DHCP</span></div>
<div class="ck" style="left:20px;top:184px"><i class="r on"><b></b></i><span class="t" style="font-size:14.8px;letter-spacing:-0.369px">Ja</span></div>
<div class="ck" style="left:20px;top:208px"><i class="r off"></i><span class="t" style="font-size:14.8px;letter-spacing:-0.093px">Nein</span></div>
<div class="lb" style="left:395.4px;top:66px"><span class="t tx" style="font-size:14.8px;transform:scaleX(0.9314)">VLAN Id</span></div>
<div class="in" style="left:395.4px;top:98px;width:360.2px"></div>
<div class="lb" style="left:395.4px;top:152px"><span class="t tx" style="font-size:14.8px;transform:scaleX(0.9416)">VLAN Prio</span></div>
<div class="in" style="left:395.4px;top:184px;width:360.2px"></div>
<div class="ck" style="left:395.4px;top:238px"><i class="on"><svg width="8" height="8" viewBox="0 0 8 8"><path fill="#fff" d="M6.564.75l-3.590 3.612-1.538-1.550L0 4.260l2.974 2.990L8 2.193z"/></svg></i><span class="t" style="font-size:14.8px;letter-spacing:0.006px">Redirection-Server</span></div>
</div>
<div class="card" style="left:1052px;top:602px;width:776px;height:344px"><div class="hd"><span class="t" style="font-size:16px;letter-spacing:0.400px">Log/Debug</span></div>
<div class="ck" style="left:20px;top:66px"><i class="off"></i><span class="t" style="font-size:14.8px;letter-spacing:0.042px">Multizelle Debug-Modus aktivieren</span></div>
<div class="ck" style="left:20px;top:106px"><i class="off"></i><span class="t" style="font-size:14.8px;letter-spacing:-0.052px">Syslog aktivieren</span></div>
<div class="lb" style="left:395.4px;top:66px"><span class="t" style="font-size:14.8px;letter-spacing:-0.258px">Syslog-Server IP-Adresse</span></div>
<div class="in" style="left:395.4px;top:98px;width:360.2px"></div>
<div class="lb" style="left:395.4px;top:152px"><span class="t" style="font-size:14.8px;letter-spacing:-0.114px">Syslog-Server Port</span></div>
<div class="in" style="left:395.4px;top:184px;width:360.2px"></div>
<div class="lb" style="left:395.4px;top:238px"><span class="t" style="font-size:14.8px;letter-spacing:-0.397px">Log Level</span></div>
<div class="in sel" style="left:395.4px;top:270px;width:360.2px"><span class="t tx" style="font-size:15.0px;transform:scaleX(0.9204)">Aus</span><svg width="8" height="10" viewBox="0 0 4 5"><path fill="#343a40" d="M2 0L0 2h4zm0 5L0 3h4z"/></svg></div>
</div>
<div id="foot"></div>
<div id="submit"><span class="t" style="font-size:15.0px;letter-spacing:-0.180px">Absenden</span></div>
</body>
</html>
